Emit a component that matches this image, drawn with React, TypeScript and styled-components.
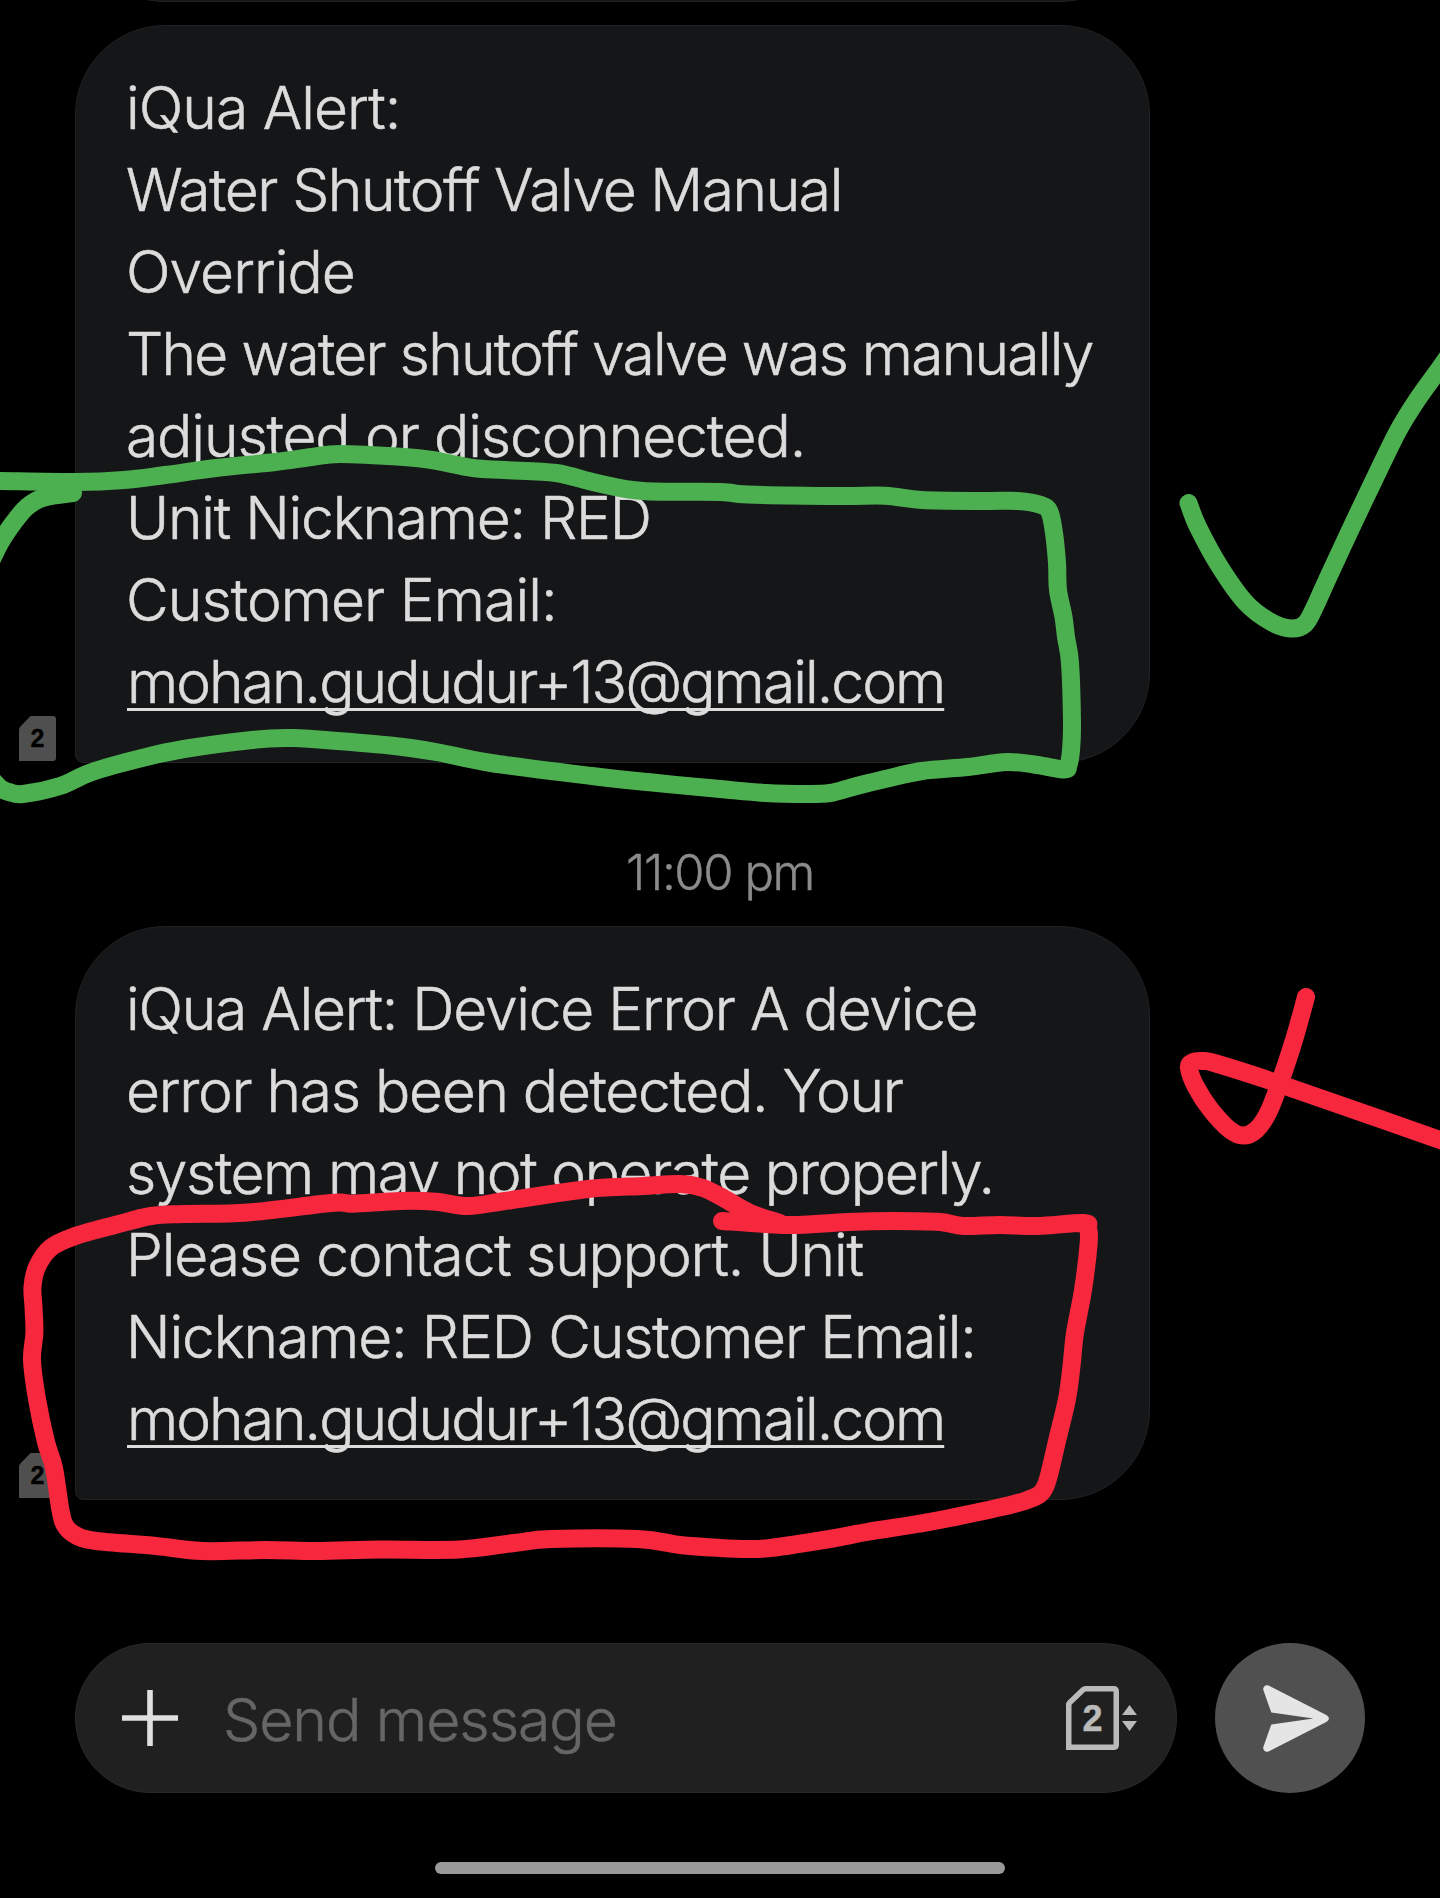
import React from "react";
import styled, { createGlobalStyle } from "styled-components";

const GlobalStyle = createGlobalStyle`
  *, *::before, *::after { box-sizing: border-box; }
  html, body { margin: 0; padding: 0; background: #000; }
  body { font-family: "Inter", "Liberation Sans", sans-serif; overflow: hidden; }
`;

const Screen = styled.main`
  position: relative;
  display: flex;
  flex-direction: column;
  width: 1440px;
  height: 1898px;
  background: #000;
  color: #dcdcdc;
  overflow: hidden;
`;

const Thread = styled.section`
  display: flex;
  flex-direction: column;
  height: 1643px;
`;

const PreviousBubble = styled.div`
  width: 1075px;
  height: 200px;
  margin: -198px 0 23px 75px;
  flex: none;
  border: 1px solid #202224;
  border-radius: 90px;
  background: #151618;
`;

const MessageRow = styled.article`
  display: flex;
  align-items: flex-end;
  gap: 19px;
  padding-left: 19px;
`;

const SimBadge = styled.div`
  display: flex;
  width: 37px;
  height: 45px;
  margin-bottom: 2px;
  align-items: center;
  justify-content: center;
  background: #4f4f4f;
  clip-path: path("M12.5 0H34Q37 0 37 3V42Q37 45 34 45H0V14Q0 12 1.4 10.6L10.4 1.2Q11.4 0 12.5 0Z");
  color: #000;
  font: 700 25px/47px "Liberation Sans", sans-serif;
  -webkit-text-stroke: 0.4px currentColor;
`;

const Bubble = styled.div`
  width: 1075px;
  padding: 40px 0 40px 50px;
  border: 1px solid #1f2123;
  border-radius: 90px 90px 90px 8px;
  background: #151618;
`;

const Line = styled.div<{ $track: number }>`
  height: 82px;
  font-size: 58.7px;
  font-weight: 300;
  line-height: 83px;
  letter-spacing: ${(p) => p.$track}px;
  white-space: nowrap;
  -webkit-text-stroke: 0.55px currentColor;
`;

const Email = styled.span`
  margin-left: 1px;
  text-decoration: underline;
  text-decoration-thickness: 3px;
  text-underline-offset: 5px;
  text-decoration-skip-ink: none;
`;

const Timestamp = styled.time`
  height: 163px;
  padding-top: 80px;
  color: #8b8b8b;
  font-size: 49px;
  font-weight: 300;
  line-height: 60px;
  letter-spacing: -1.4px;
  text-align: center;
  -webkit-text-stroke: 0.4px currentColor;
`;

const Composer = styled.form`
  display: flex;
  height: 150px;
  gap: 38px;
  padding-left: 75px;
`;

const Field = styled.div`
  display: flex;
  width: 1102px;
  align-items: center;
  padding: 0 39px 0 46px;
  border: 1px solid #292929;
  border-radius: 75px;
  background: #202020;
`;

const Placeholder = styled.span`
  flex: 1;
  margin-left: 45px;
  padding-top: 4px;
  color: #666;
  font-size: 59px;
  font-weight: 300;
  line-height: 76px;
  letter-spacing: -1.1px;
  -webkit-text-stroke: 0.5px currentColor;
`;

const SimPicker = styled.div`
  display: flex;
  align-items: center;
  gap: 3px;
`;

const SimCard = styled.div`
  display: grid;
  width: 53px;
  height: 64px;
  place-items: center;
`;

const SimOutline = styled.svg`
  grid-area: 1 / 1;
`;

const SimNumber = styled.span`
  grid-area: 1 / 1;
  padding-top: 2px;
  color: #bababa;
  font: 700 36px/40px "Liberation Sans", sans-serif;
  -webkit-text-stroke: 0.5px currentColor;
`;

const SendButton = styled.button`
  display: flex;
  width: 150px;
  height: 150px;
  align-items: center;
  justify-content: center;
  padding: 0 0 0 12px;
  border: 0;
  border-radius: 50%;
  background: #505050;
`;

const HomeIndicator = styled.div`
  width: 570px;
  height: 12px;
  margin: 69px auto 0;
  border-radius: 6px;
  background: #999;
`;

const Ink = styled.svg`
  position: absolute;
  inset: 0;
  fill: none;
  stroke-width: 18;
  stroke-linecap: round;
  stroke-linejoin: round;
  pointer-events: none;
`;

type Point = [number, number];

const smooth = (p: Point[]) =>
  p.slice(1).reduce((d, [x, y], i) => {
    const a = p[Math.max(i - 1, 0)];
    const b = p[i];
    const e = p[Math.min(i + 2, p.length - 1)];
    return `${d}C${b[0] + (x - a[0]) / 6} ${b[1] + (y - a[1]) / 6} ${x - (e[0] - b[0]) / 6} ${y - (e[1] - b[1]) / 6} ${x} ${y}`;
  }, `M${p[0][0]} ${p[0][1]}`);

const greenBox: Point[] = [
  [-12, 481], [0, 481], [76, 482], [124, 480], [165, 475], [216, 468], [275, 462], [312, 457], [340, 454], [404, 457],
  [432, 460], [473, 468], [505, 470], [556, 473], [597, 483], [643, 491], [720, 492], [748, 494.5], [839, 496], [885, 495.7],
  [922, 500], [986, 501], [1018, 501], [1041, 505], [1049.6, 512], [1054, 533], [1057, 563], [1058, 590], [1063.5, 617],
  [1066, 637], [1070, 663], [1072, 723], [1071, 750], [1068.5, 765], [1064, 769.5], [1037, 765], [1007, 762], [968, 767],
  [922, 771], [885, 779], [853, 787], [830, 793], [807, 794], [766, 793], [720, 789], [657, 783], [592, 776], [491, 763],
  [436, 752], [390, 745.5], [312, 739], [289, 738], [252, 740], [184, 749], [142, 758], [92, 772], [60, 786], [23, 794],
  [9, 792], [0, 788], [-12, 775],
];
const greenTail: Point[] = [[-14, 572], [0, 543], [14, 522], [27.5, 506.5], [44, 497.5], [73, 493]];
const greenTick: Point[] = [
  [1188.5, 503], [1198, 527], [1220, 567], [1246, 603], [1271, 622], [1291, 628.5], [1305, 624], [1315, 606.5], [1327, 580],
  [1353.5, 523], [1374, 480], [1398, 431], [1417, 400], [1440, 368], [1454, 348],
];
const redBox: Point[] = [
  [722, 1221], [766, 1224], [798, 1225], [848, 1222], [894, 1221], [940, 1222], [963, 1226], [1000, 1225], [1037, 1226],
  [1083, 1223], [1088, 1228], [1088.7, 1243], [1083, 1290], [1075, 1333], [1071.5, 1366], [1067, 1399], [1057.5, 1439],
  [1049, 1475], [1044.5, 1488], [1037, 1496], [1014, 1504], [950, 1518], [917, 1524], [867, 1532], [830, 1539], [770, 1548],
  [747, 1549], [720, 1548], [680, 1545], [638, 1539], [551, 1539], [514, 1543], [459, 1549.5], [381, 1549.5], [317, 1551],
  [266, 1550], [202, 1551], [156, 1546], [96, 1541], [78, 1536.5], [66, 1527], [60.6, 1511], [54, 1468], [46, 1442],
  [37, 1399], [32, 1360], [34.4, 1333], [33.5, 1307], [32.5, 1287], [37, 1267], [50.5, 1248], [74, 1236.5], [115, 1225],
  [151, 1216], [184, 1214], [248, 1212.5], [331, 1203], [353, 1203.7], [400, 1201], [436, 1201.7], [468, 1206], [505, 1201],
  [588, 1189], [643, 1186], [680, 1184], [703, 1188], [725, 1199], [750, 1213], [780, 1223],
];
const redTick: Point[] = [
  [1306, 997], [1294, 1040], [1279, 1085], [1268, 1113], [1256, 1130], [1243.5, 1135.5], [1230, 1130], [1211, 1110],
  [1196, 1087], [1189, 1068], [1193, 1062], [1203, 1061], [1216, 1063.5], [1271, 1081], [1363, 1113], [1440, 1140], [1462, 1148],
];

interface MessageLine {
  text: string;
  track: number;
  email?: boolean;
}

const manualOverride: MessageLine[] = [
  { text: "iQua Alert:", track: -0.96 },
  { text: "Water Shutoff Valve Manual", track: -1.41 },
  { text: "Override", track: -0.95 },
  { text: "The water shutoff valve was manually", track: -1.75 },
  { text: "adjusted or disconnected.", track: -1.12 },
  { text: "Unit Nickname: RED", track: -1.23 },
  { text: "Customer Email:", track: -0.93 },
  { text: "mohan.gududur+13@gmail.com", track: -1.95, email: true },
];
const deviceError: MessageLine[] = [
  { text: "iQua Alert: Device Error A device", track: -1.25 },
  { text: "error has been detected. Your", track: -1.29 },
  { text: "system may not operate properly.", track: -1.44 },
  { text: "Please contact support. Unit", track: -1.15 },
  { text: "Nickname: RED Customer Email:", track: -1.13 },
  { text: "mohan.gududur+13@gmail.com", track: -1.95, email: true },
];

const Message = ({ lines }: { lines: MessageLine[] }) => (
  <MessageRow>
    <SimBadge>2</SimBadge>
    <Bubble>
      {lines.map(({ text, track, email }) => (
        <Line key={text} $track={track}>
          {email ? <Email>{text}</Email> : text}
        </Line>
      ))}
    </Bubble>
  </MessageRow>
);

export default function App() {
  return (
    <Screen>
      <GlobalStyle />
      <Thread>
        <PreviousBubble />
        <Message lines={manualOverride} />
        <Timestamp>11:00 pm</Timestamp>
        <Message lines={deviceError} />
      </Thread>
      <Composer>
        <Field>
          <svg width="56" height="56" viewBox="0 0 56 56" stroke="#e0e0e0" strokeWidth="5.6">
            <path d="M28 0V56M0 28H56" />
          </svg>
          <Placeholder>Send message</Placeholder>
          <SimPicker>
            <SimCard>
              <SimOutline width="53" height="64" viewBox="0 0 53 64" fill="none" stroke="#bababa" strokeWidth="5.5">
                <path d="M2.75 61.25V18.8Q2.75 17.4 3.8 16.4L17.4 3.6Q18.3 2.75 19.5 2.75H47.5Q50.25 2.75 50.25 5.5V58.5Q50.25 61.25 47.5 61.25Z" />
              </SimOutline>
              <SimNumber>2</SimNumber>
            </SimCard>
            <svg width="15" height="26" viewBox="0 0 15 26" fill="#bababa">
              <path d="M7.5 0L15 10H0ZM0 16H15L7.5 26Z" />
            </svg>
          </SimPicker>
        </Field>
        <SendButton type="button" aria-label="Send">
          <svg width="66" height="67" viewBox="0 0 66 67" fill="#e5e5e5">
            <path d="M5.6.6L63.3 30Q66 31.6 66 33.5Q66 35.4 63.3 37L5.6 66.4Q3 67.4 1.2 65.5Q-.2 64 .4 61.8L8.3 39.5L50.5 33.5L8.3 27.5L.4 5.2Q-.2 3 1.2 1.4Q3-.4 5.6.6Z" />
          </svg>
        </SendButton>
      </Composer>
      <HomeIndicator />
      <Ink width="1440" height="1898" viewBox="0 0 1440 1898">
        <g stroke="#4db050">
          <path d={smooth(greenBox)} />
          <path d={smooth(greenTail)} />
          <path d={smooth(greenTick)} />
        </g>
        <g stroke="#f7273e">
          <path d={smooth(redBox)} />
          <path d={smooth(redTick)} />
        </g>
      </Ink>
    </Screen>
  );
}
